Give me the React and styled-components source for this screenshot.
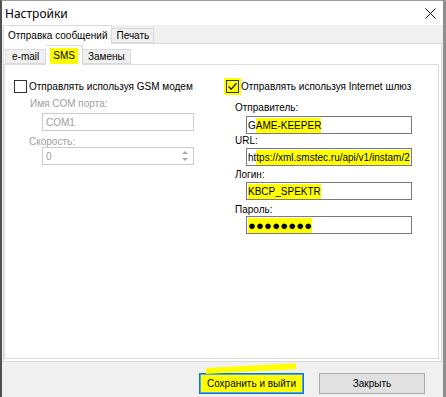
import React from 'react';
import styled, { createGlobalStyle, css } from 'styled-components';

const Global = createGlobalStyle`
  html, body { margin: 0; padding: 0; background: #f0f0f0; }
  body { font-family: "Liberation Sans", Arial, sans-serif; font-size: 10px; color: #000; }
  * { box-sizing: border-box; }
`;

const Window = styled.div`
  width: 446px;
  height: 397px;
  border-left: 2px solid #505050;
  border-right: 3px solid #8e8e8e;
  border-top: 1px solid #9a9a9a;
  background: #f0f0f0;
  display: flex;
  flex-direction: column;
  overflow: hidden;
`;

const TitleBar = styled.div`
  height: 24px;
  flex: none;
  background: #fff;
  display: flex;
  align-items: center;
  justify-content: space-between;
  padding: 0 7px 0 3px;
  font-family: "Noto Sans", "Open Sans", sans-serif;
  font-size: 12px;
`;

const CloseIcon = styled.svg`
  width: 11px;
  height: 11px;
  margin-top: 1px;
`;

const Body = styled.div`
  flex: 1;
  display: flex;
  flex-direction: column;
  padding: 0 1px 0 1px;
`;

const TabStrip = styled.div`
  display: flex;
  align-items: flex-end;
  height: ${p => p.$h}px;
  flex: none;
  position: relative;
  z-index: 1;
`;

const Tab = styled.div`
  height: ${p => (p.$active ? p.$ah : p.$ih)}px;
  ${p => p.$active && css`margin-bottom: -1px;`}
  border: 1px solid #d9d9d9;
  border-bottom: ${p => (p.$active ? 'none' : '1px solid #d9d9d9')};
  background: ${p => (p.$active ? '#fff' : '#f0f0f0')};
  padding: 0 ${p => p.$px}px;
  display: flex;
  align-items: center;
  white-space: nowrap;
  & + & { border-left: ${p => (p.$active ? '1px solid #d9d9d9' : 'none')}; }
`;

const Mark = styled.span`
  background: #ffff00;
  ${p => p.$block && css`
    display: inline-block;
    line-height: ${p.$lh || 15}px;
  `}
`;

const OuterPage = styled.div`
  width: 439px;
  height: 319px;
  border: 1px solid #d9d9d9;
  background: #fff;
  display: flex;
  flex-direction: column;
  padding: 0 2px 2px 0;
`;

const InnerTabs = styled(TabStrip)`
  margin-top: 1px;
`;

const InnerPage = styled.div`
  flex: 1;
  border: 1px solid #dcdcdc;
  background: #fff;
  display: grid;
  grid-template-columns: 212px 1fr;
  align-items: start;
  padding: 15px 0 0 9px;
`;

const Column = styled.div`
  display: flex;
  flex-direction: column;
`;

const CheckRow = styled.label`
  display: flex;
  align-items: center;
  gap: 2px;
  height: 13px;
  line-height: 13px;
  white-space: nowrap;
`;

const Box = styled.span`
  width: 13px;
  height: 13px;
  flex: none;
  border: 1px solid #333;
  background: ${p => (p.$hl ? '#ffff00' : '#fff')};
  ${p => p.$hl && css`box-shadow: 0 0 0 2px #ffff00;`}
  display: flex;
  align-items: center;
  justify-content: center;
`;

const FieldLabel = styled.div`
  margin: ${p => p.$m};
  line-height: ${p => p.$lh || 13}px;
  height: ${p => p.$lh || 13}px;
  color: ${p => (p.$disabled ? '#a0a0a0' : '#000')};
  white-space: nowrap;
`;

const Input = styled.div`
  margin: ${p => p.$m};
  width: ${p => p.$w}px;
  height: ${p => p.$h || 18}px;
  border: 1px solid ${p => (p.$disabled ? '#cccccc' : '#7a7a7a')};
  background: #fff;
  color: ${p => (p.$disabled ? '#a0a0a0' : '#000')};
  display: flex;
  align-items: center;
  padding-left: ${p => p.$pl ?? 2}px;
  white-space: nowrap;
  overflow: hidden;
  position: relative;
`;

const Spinner = styled.div`
  position: absolute;
  right: 1px;
  top: 1px;
  bottom: 1px;
  width: 14px;
  display: flex;
  flex-direction: column;
`;

const SpinBtn = styled.div`
  flex: 1;
  display: flex;
  align-items: center;
  justify-content: center;
  &::after {
    content: '';
    border-left: 3px solid transparent;
    border-right: 3px solid transparent;
    ${p => (p.$up
      ? css`border-bottom: 3px solid #a8a8a8;`
      : css`border-top: 3px solid #a8a8a8;`)}
  }
`;

const Dots = styled.span`
  background: #ffff00;
  display: inline-block;
  line-height: 15px;
  font-size: 13px;
  letter-spacing: 0.2px;
  font-family: "Liberation Sans", Arial, sans-serif;
`;

const Footer = styled.div`
  flex: 1;
  display: flex;
  justify-content: flex-end;
  align-items: flex-start;
  gap: 15px;
  padding: 11px 17px 0 0;
`;

const Button = styled.button`
  position: relative;
  width: ${p => p.$w}px;
  height: 21px;
  font-family: "Liberation Sans", Arial, sans-serif;
  font-size: 10px;
  color: #000;
  background: ${p => (p.$hl ? '#ffff00' : '#e1e1e1')};
  border: 1px solid ${p => (p.$default ? '#0078d7' : '#adadad')};
  ${p => p.$default && css`box-shadow: inset 0 0 0 1px #5aa0e6;`}
  padding: 0;
  ${p => p.$hl && css`
    &::before {
      content: '';
      position: absolute;
      left: 6px;
      top: -6px;
      width: 90px;
      height: 6px;
      background: #ffff00;
      transform: skewY(-3deg);
      transform-origin: left bottom;
    }
  `}
`;

function CheckMark() {
  return (
    <svg width="11" height="11" viewBox="0 0 11 11">
      <polyline points="1.5,5.5 4.2,8.3 9.5,2.2" fill="none" stroke="#222" strokeWidth="1.3" />
    </svg>
  );
}

export default function App() {
  return (
    <>
      <Global />
      <Window>
        <TitleBar>
          <span>Настройки</span>
          <CloseIcon viewBox="0 0 11 11">
            <path d="M0.5 0.5 L10.5 10.5 M10.5 0.5 L0.5 10.5" stroke="#111" strokeWidth="1" />
          </CloseIcon>
        </TitleBar>
        <Body>
          <TabStrip $h={18}>
            <Tab $active $ah={19} $px={4}>Отправка сообщений</Tab>
            <Tab $ih={15} $px={4}>Печать</Tab>
          </TabStrip>
          <OuterPage>
            <InnerTabs $h={19}>
              <Tab $ih={15} $px={6} style={{ marginLeft: 1 }}>e-mail</Tab>
              <Tab $active $ah={20} $px={4}><Mark $block $lh={16} style={{ padding: '0 3px' }}>SMS</Mark></Tab>
              <Tab $ih={15} $px={5}>Замены</Tab>
            </InnerTabs>
            <InnerPage>
              <Column>
                <CheckRow>
                  <Box />
                  <span>Отправлять используя GSM модем</span>
                </CheckRow>
                <FieldLabel $disabled $m="4px 0 0 16px">Имя COM порта:</FieldLabel>
                <Input $disabled $w={152} $m="3px 0 0 28px" $pl={3}>COM1</Input>
                <FieldLabel $disabled $lh={11} $m="5px 0 0 15px">Скорость:</FieldLabel>
                <Input $disabled $w={152} $m="0 0 0 28px" $pl={3}>
                  0
                  <Spinner>
                    <SpinBtn $up />
                    <SpinBtn />
                  </Spinner>
                </Input>
              </Column>
              <Column>
                <CheckRow>
                  <Box $hl><CheckMark /></Box>
                  <span>Отправлять используя Internet шлюз</span>
                </CheckRow>
                <FieldLabel $m="8px 0 0 9px">Отправитель:</FieldLabel>
                <Input $w={166} $m="2px 0 0 20px" $pl={1}>G<Mark $block>AME-KEEPER</Mark></Input>
                <FieldLabel $m="0 0 0 9px">URL:</FieldLabel>
                <Input $w={166} $m="1px 0 0 20px" $pl={1}>ht<Mark $block>tps://xml.smstec.ru/api/v1/instam/2</Mark></Input>
                <FieldLabel $m="2px 0 0 9px">Логин:</FieldLabel>
                <Input $w={166} $m="1px 0 0 20px" $pl={1}><Mark $block>KBCP_SPEKTR</Mark></Input>
                <FieldLabel $m="3px 0 0 9px">Пароль:</FieldLabel>
                <Input $w={166} $m="0 0 0 20px" $pl={1}><Dots>●●●●●●●●</Dots></Input>
              </Column>
            </InnerPage>
          </OuterPage>
          <Footer>
            <Button $w={105} $default $hl>Сохранить и выйти</Button>
            <Button $w={106}>Закрыть</Button>
          </Footer>
        </Body>
      </Window>
    </>
  );
}
